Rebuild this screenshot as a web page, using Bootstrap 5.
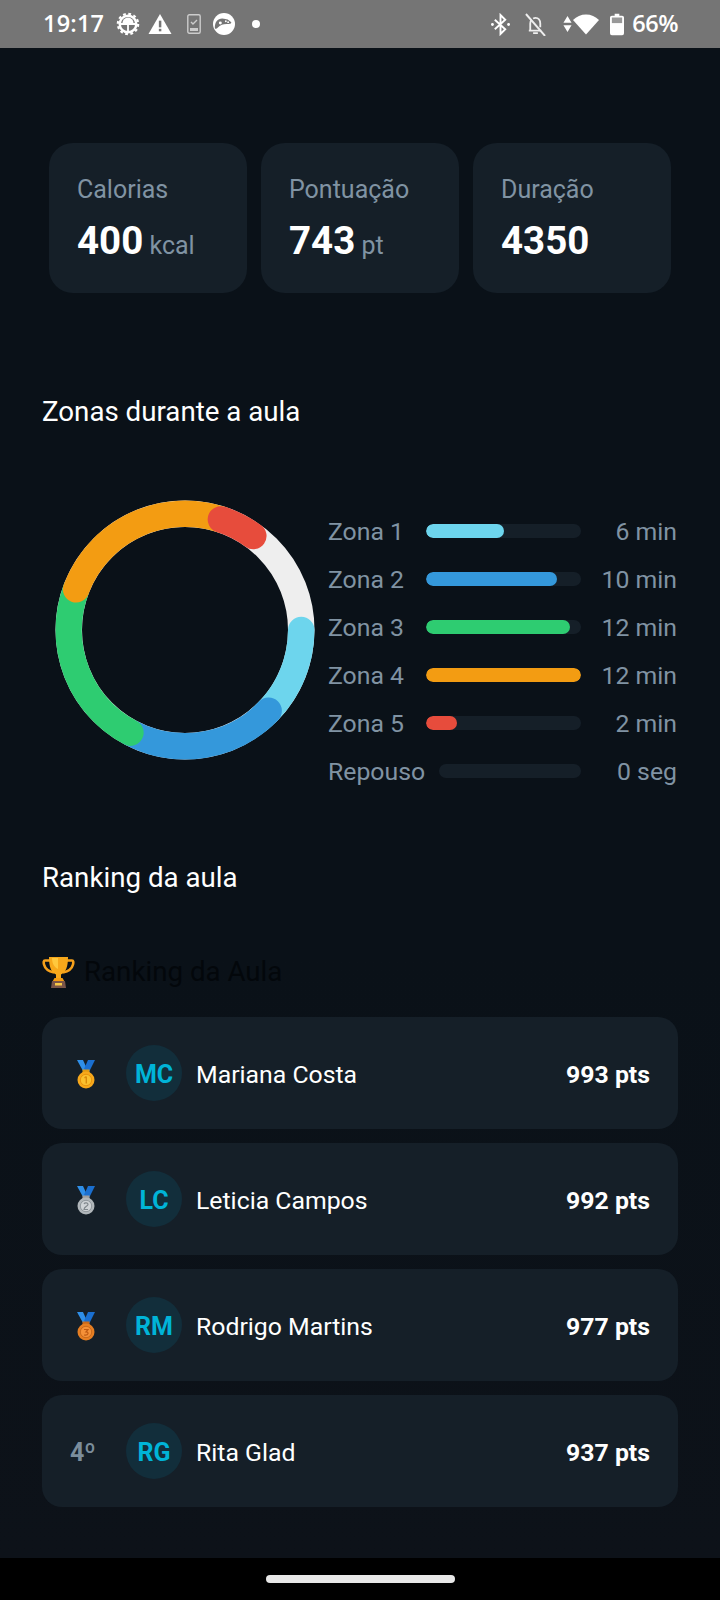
<!DOCTYPE html>
<html lang="pt">
<head>
<meta charset="utf-8">
<title>Resumo da aula</title>
<link href="https://cdn.jsdelivr.net/npm/bootstrap@5.3.0/dist/css/bootstrap.min.css" rel="stylesheet">
<style>
html,body{height:1600px;}
body{width:720px;background:#0a1118;font-family:Roboto,"Liberation Sans",sans-serif;overflow:hidden;color:#fff;}
.sbar{height:48px;flex:none;background:#757575;padding:0 42px 0 43px;font-family:"Open Sans",Roboto,sans-serif;font-size:23.5px;font-weight:600;letter-spacing:.2px;}
.gap-gear{margin-left:12px;}.gap-tri{margin-left:8px;}.gap-ph{margin-left:14px;}.gap-game{margin-left:11px;}.gap-dot{margin-left:17px;}
.gap-bell{margin-left:15px;}.gap-arr{margin-left:17px;}.gap-wifi{margin-left:1px;}.gap-bat{margin-left:11.5px;}.gap-pct{margin-left:8px;letter-spacing:-.5px;}
.page-main{padding:95px 42px 0;height:1510px;flex:none;background:linear-gradient(#0a1118 60%,#0d1219);}
.stat-grid{display:grid;grid-template-columns:repeat(3,198px);gap:14px;margin:0 7px;}
.stat-box{height:150px;background:#151f28;border-radius:24px;padding:28px 28px 0;}
.stat-label{font-size:25px;line-height:38px;color:#8093a3;}
.stat-value{font-size:38.5px;line-height:52px;font-weight:700;margin-top:6px;}
.stat-value span{font-size:25px;font-weight:400;color:#8093a3;}
.sec-title{font-size:27.7px;line-height:34px;font-weight:400;color:#fff;margin:0;}
.zonas-h{margin-top:102px;}
.zone-wrap{margin-top:70.5px;}
.zone-chart{width:260px;height:260px;margin-left:13px;flex:none;}
.zone-list{margin-left:13px;margin-top:7.5px;width:349px;}
.zone-row{height:48px;gap:14px;font-size:24.8px;color:#8093a3;}
.zone-name,.zone-val{padding-top:2px;}
.zone-name{min-width:84px;}
.zone-track{height:14px;flex:1 1 auto;background:#151f28;border-radius:7px;overflow:hidden;}
.zone-fill{height:100%;border-radius:7px;}
.zone-val{min-width:82px;text-align:right;}
.rank-h{margin-top:66px;}
.rank-sub{margin-top:58px;font-size:27.7px;line-height:38px;color:#03070b;gap:9px;}
.rank-rows{margin-top:26px;gap:14px;}
.rank-row{height:112px;background:#151f28;border-radius:20px;padding:0 28px;gap:14px;}
.rank-pos{width:42px;font-size:25px;font-weight:700;color:#7b8d9c;padding-top:3px;}
.medal-ic{display:block;margin-left:6.5px;}
.rank-av{width:56px;height:56px;border-radius:50%;background:#122e3b;color:#00b4d8;font-size:25px;font-weight:700;flex:none;padding-top:3px;}
.rank-name{font-size:24.8px;flex:1 1 auto;padding-top:3px;}
.rank-pts{font-size:24.8px;font-weight:700;padding-top:3px;}
.navz{height:42px;flex:none;background:#000;}
.navpill{width:189px;height:8px;border-radius:4px;background:#e8e8e8;}
</style>
</head>
<body class="d-flex flex-column">
<div class="sbar d-flex align-items-center justify-content-between">
  <div class="d-flex align-items-center">
    <span>19:17</span>
    <svg class="gap-gear" width="24" height="24" viewBox="0 0 26 26"><g fill="none" stroke="#fff"><circle cx="13" cy="13" r="9" stroke-width="2.6"/><circle cx="13" cy="13" r="11" stroke-width="2.4" stroke-dasharray="3 2.76"/><path d="M4 13h18M13 13v9" stroke-width="2"/></g><path d="M7 12a6 6 0 0 1 12 0z" fill="#fff"/></svg>
    <svg class="gap-tri" width="24" height="23" viewBox="0 0 25 24"><path d="M12.5 1 24.5 22H.5z" fill="#fff"/><rect x="11.3" y="8" width="2.6" height="7" fill="#757575"/><rect x="11.3" y="16.500" width="2.6" height="2.6" fill="#757575"/></svg>
    <svg class="gap-ph" width="16" height="20" viewBox="0 0 14 20"><rect x=".8" y=".8" width="12.4" height="18.4" rx="1.5" fill="none" stroke="#ccc" stroke-width="1.4"/><path d="M4 8l2 2 4-4" fill="none" stroke="#ccc" stroke-width="1.4"/><rect x="3" y="14" width="8" height="3" fill="#ccc"/></svg>
    <svg class="gap-game" width="22" height="22" viewBox="0 0 24 24"><circle cx="12" cy="12" r="12" fill="#fff"/><path d="M2 16c0-6 3-10 8-10 3 0 4 1 6 1l4 3c0 2-3 2-5 2-4 0-7 1-10 4-1 1-3 2-3 0z" fill="#757575"/><circle cx="8" cy="11" r="1.6" fill="#fff"/><circle cx="14" cy="9" r="1" fill="#fff"/><circle cx="16.500" cy="10" r="1" fill="#fff"/></svg>
    <svg class="gap-dot" width="8" height="8" viewBox="0 0 8 8"><circle cx="4" cy="4" r="4" fill="#fff"/></svg>
  </div>
  <div class="d-flex align-items-center">
    <svg width="19" height="23" viewBox="0 0 20 24"><path d="M4 7l11 10-5 5V2l5 5L4 17" fill="none" stroke="#fff" stroke-width="2"/><circle cx="1.500" cy="12" r="1.500" fill="#fff"/><circle cx="18.500" cy="12" r="1.500" fill="#fff"/></svg>
    <svg class="gap-bell" width="21" height="23" viewBox="0 0 22 24"><path d="M4 18.500h13M5.500 18v-7c0-2 .5-3 1.500-4M16 15v-4c0-4-2-6-5-6-1 0-1.500.2-2.500.7M8.500 21h5" fill="none" stroke="#eee" stroke-width="1.900"/><path d="M1 1l20 23" stroke="#eee" stroke-width="2"/></svg>
    <svg class="gap-arr" width="9" height="18" viewBox="0 0 10 18"><path d="M5 0l4.500 7.500h-9zM5 18l4.500-7.500h-9z" fill="#fff"/></svg>
    <svg class="gap-wifi" width="26" height="21" viewBox="0 0 26 20"><path d="M13 20 0 5.500C3.500 2 8 0 13 0s9.500 2 13 5.500z" fill="#fff"/></svg>
    <svg class="gap-bat" width="14" height="23" viewBox="0 0 15 23"><path d="M5 0h5v2h3a2 2 0 0 1 2 2v17a2 2 0 0 1-2 2H2a2 2 0 0 1-2-2V4a2 2 0 0 1 2-2h3z" fill="#fff"/><rect x="2" y="4" width="11" height="6" fill="#999"/></svg>
    <span class="gap-pct">66%</span>
  </div>
</div>
<main class="page-main">
  <div class="stat-grid">
    <div class="stat-box"><div class="stat-label">Calorias</div><div class="stat-value">400<span> kcal</span></div></div>
    <div class="stat-box"><div class="stat-label">Pontuação</div><div class="stat-value">743<span> pt</span></div></div>
    <div class="stat-box"><div class="stat-label">Duração</div><div class="stat-value">4350</div></div>
  </div>
  <h2 class="sec-title zonas-h">Zonas durante a aula</h2>
  <div class="zone-wrap d-flex align-items-start">
    <svg class="zone-chart" viewBox="0 0 260 260">
      <g fill="none" stroke-width="26.500" stroke-linecap="round">
        <circle cx="130" cy="130" r="116.250" stroke="#eeeeee" stroke-linecap="butt"/>
        <circle cx="130" cy="130" r="116.250" stroke="#6dd5ed" pathLength="360" stroke-dasharray="50 310"/>
        <circle cx="130" cy="130" r="116.250" stroke="#3498db" pathLength="360" stroke-dasharray="74 286" transform="rotate(44 130 130)"/>
        <circle cx="130" cy="130" r="116.250" stroke="#2ecc71" pathLength="360" stroke-dasharray="82 278" transform="rotate(118 130 130)"/>
        <circle cx="130" cy="130" r="116.250" stroke="#f39c12" pathLength="360" stroke-dasharray="88 272" transform="rotate(200.500 130 130)"/>
        <circle cx="130" cy="130" r="116.250" stroke="#e74c3c" pathLength="360" stroke-dasharray="18 342" transform="rotate(288 130 130)"/>
      </g>
    </svg>
    <div class="zone-list">
      <div class="zone-row d-flex align-items-center"><span class="zone-name">Zona 1</span><div class="zone-track"><div class="zone-fill" style="width:50.600%;background:#6dd5ed"></div></div><span class="zone-val">6 min</span></div>
      <div class="zone-row d-flex align-items-center"><span class="zone-name">Zona 2</span><div class="zone-track"><div class="zone-fill" style="width:84.400%;background:#3498db"></div></div><span class="zone-val">10 min</span></div>
      <div class="zone-row d-flex align-items-center"><span class="zone-name">Zona 3</span><div class="zone-track"><div class="zone-fill" style="width:92.900%;background:#2ecc71"></div></div><span class="zone-val">12 min</span></div>
      <div class="zone-row d-flex align-items-center"><span class="zone-name">Zona 4</span><div class="zone-track"><div class="zone-fill" style="width:100%;background:#f39c12"></div></div><span class="zone-val">12 min</span></div>
      <div class="zone-row d-flex align-items-center"><span class="zone-name">Zona 5</span><div class="zone-track"><div class="zone-fill" style="width:20%;background:#e74c3c"></div></div><span class="zone-val">2 min</span></div>
      <div class="zone-row d-flex align-items-center"><span class="zone-name">Repouso</span><div class="zone-track"></div><span class="zone-val">0 seg</span></div>
    </div>
  </div>
  <h2 class="sec-title rank-h">Ranking da aula</h2>
  <div class="rank-sub d-flex align-items-center">
    <svg width="33" height="31" viewBox="0 0 33 31"><path d="M8 3.500H3c-1.500 0-1.500 2-1 4 1 4 5 7 10 8M25 3.500h5c1.500 0 1.500 2 1 4-1 4-5 7-10 8" fill="none" stroke="#f5a01b" stroke-width="2.600"/><path d="M7 0h19c0 10-2 15-7 17.500V22h-5v-4.500C9 15 7 10 7 0z" fill="#f7a81b"/><path d="M10 1h6v11c-4-2-6-6-6-11z" fill="#ffc83d"/><path d="M12.500 21h8l2 3.500h-12z" fill="#f39c12"/><path d="M10 24h13l1 7H9z" fill="#7a5548"/><rect x="13" y="26" width="7" height="2.500" fill="#f7c948"/></svg>
    <span>Ranking da Aula</span>
  </div>
  <div class="rank-rows d-flex flex-column">
    <div class="rank-row d-flex align-items-center">
      <div class="rank-pos"><svg class="medal-ic" width="18" height="29" viewBox="0 0 18 29"><path d="M0 0h6l5 11H6z" fill="#2f8fe8"/><path d="M18 0h-7L7 9l3 3h2z" fill="#1a6fd0"/><rect x="5.500" y="9.500" width="7" height="3.500" fill="#e09a12"/><circle cx="9" cy="20" r="8.500" fill="#f7a81b"/><circle cx="9" cy="20" r="5.700" fill="#fbc02d" stroke="#e8930c"/><path d="M9.300 16.500v7M7.500 18 9.300 16.500" stroke="#d98a0a" stroke-width="1.400" fill="none"/></svg></div>
      <div class="rank-av d-flex align-items-center justify-content-center">MC</div>
      <div class="rank-name">Mariana Costa</div>
      <div class="rank-pts">993 pts</div>
    </div>
    <div class="rank-row d-flex align-items-center">
      <div class="rank-pos"><svg class="medal-ic" width="18" height="29" viewBox="0 0 18 29"><path d="M0 0h6l5 11H6z" fill="#2f8fe8"/><path d="M18 0h-7L7 9l3 3h2z" fill="#1a6fd0"/><rect x="5.500" y="9.500" width="7" height="3.500" fill="#9e9e9e"/><circle cx="9" cy="20" r="8.500" fill="#b0b6ba"/><circle cx="9" cy="20" r="5.700" fill="#cfd3d6" stroke="#90979c"/><path d="M7 18c1-2 4-1 4 .5S7 21 7 23.500h4" stroke="#80878c" stroke-width="1.200" fill="none"/></svg></div>
      <div class="rank-av d-flex align-items-center justify-content-center">LC</div>
      <div class="rank-name">Leticia Campos</div>
      <div class="rank-pts">992 pts</div>
    </div>
    <div class="rank-row d-flex align-items-center">
      <div class="rank-pos"><svg class="medal-ic" width="18" height="29" viewBox="0 0 18 29"><path d="M0 0h6l5 11H6z" fill="#2f8fe8"/><path d="M18 0h-7L7 9l3 3h2z" fill="#1a6fd0"/><rect x="5.500" y="9.500" width="7" height="3.500" fill="#c96a1b"/><circle cx="9" cy="20" r="8.500" fill="#e67e22"/><circle cx="9" cy="20" r="5.700" fill="#f59138" stroke="#c96a1b"/><path d="M7 17.500h4l-2 2.300c3 0 3 4-2 3.200" stroke="#bf5a12" stroke-width="1.200" fill="none"/></svg></div>
      <div class="rank-av d-flex align-items-center justify-content-center">RM</div>
      <div class="rank-name">Rodrigo Martins</div>
      <div class="rank-pts">977 pts</div>
    </div>
    <div class="rank-row d-flex align-items-center">
      <div class="rank-pos">4º</div>
      <div class="rank-av d-flex align-items-center justify-content-center">RG</div>
      <div class="rank-name">Rita Glad</div>
      <div class="rank-pts">937 pts</div>
    </div>
  </div>
</main>
<div class="navz d-flex justify-content-center align-items-center"><div class="navpill"></div></div>
</body>
</html>
